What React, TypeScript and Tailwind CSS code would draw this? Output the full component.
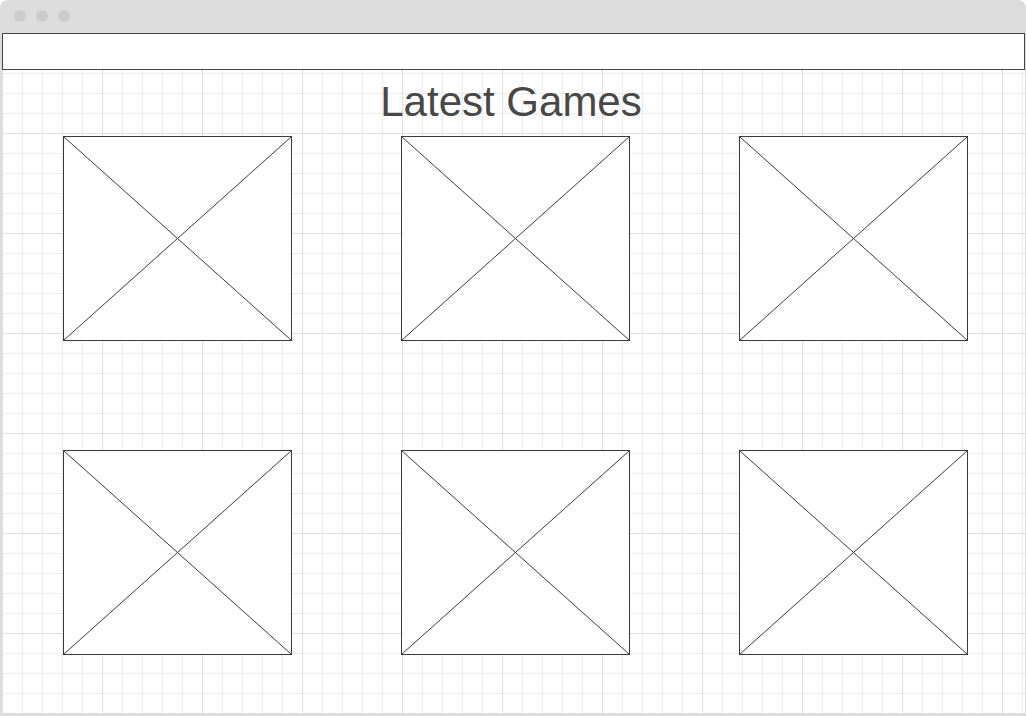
const tiles = [1, 2, 3, 4, 5, 6];

const Placeholder = () => (
    <div className="relative w-[229px] h-[205px] bg-white border border-[#3a3a3a]">
        <svg
            className="absolute inset-0 w-full h-full"
            viewBox="0 0 100 100"
            preserveAspectRatio="none"
        >
            <line x1="0" y1="0" x2="100" y2="100" stroke="#3a3a3a" strokeWidth="1" vectorEffect="non-scaling-stroke" />
            <line x1="100" y1="0" x2="0" y2="100" stroke="#3a3a3a" strokeWidth="1" vectorEffect="non-scaling-stroke" />
        </svg>
    </div>
);

const App = () => {
    return (
        <div className="w-[1026px] h-[716px] bg-[#dddddd] rounded-t-lg flex flex-col pl-[2px] pr-[1px] pb-[3px] font-['Liberation_Sans',Arial,sans-serif]">
            {/* window chrome */}
            <div className="h-[33px] shrink-0 flex items-start gap-[10px] pl-[12px] pt-[10px]">
                <span className="w-3 h-3 rounded-full bg-[#cccccc]" />
                <span className="w-3 h-3 rounded-full bg-[#cccccc]" />
                <span className="w-3 h-3 rounded-full bg-[#cccccc]" />
            </div>

            <div className="flex-1 flex flex-col bg-white bg-[linear-gradient(to_right,#dedede_1px,transparent_1px),linear-gradient(to_bottom,#dedede_1px,transparent_1px),linear-gradient(to_right,#ececec_1px,transparent_1px),linear-gradient(to_bottom,#ececec_1px,transparent_1px)] bg-[size:100px_100px,100px_100px,20px_20px,20px_20px]">
                <div className="h-[37px] shrink-0 bg-white border border-[#444444]" />

                <h1 className="mt-[11px] pr-[5px] text-center text-[42px] leading-[42px] text-[#484848]">
                    Latest Games
                </h1>

                <div className="mt-[13px] pl-[61px] grid grid-cols-[229px_229px_229px] gap-x-[109px] gap-y-[109px]">
                    {tiles.map((t) => (
                        <Placeholder key={t} />
                    ))}
                </div>
            </div>
        </div>
    );
};

export default App;
